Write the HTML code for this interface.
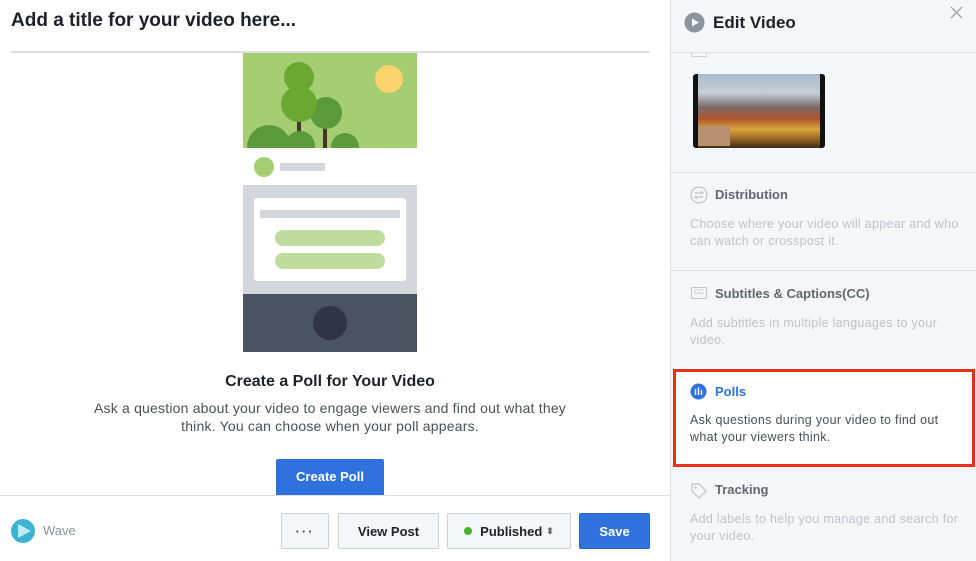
<!DOCTYPE html>
<html><head><meta charset="utf-8"><style>
*{box-sizing:border-box;margin:0;padding:0}
body{width:976px;height:561px;overflow:hidden;background:#fff;font-family:"Liberation Sans",Helvetica,Arial,sans-serif;position:relative;color:#1d2129}
.abs{position:absolute}
.title{left:11px;top:10px;font-size:19px;font-weight:bold;color:#1d2129}
.btn{position:absolute;top:513px;height:36px;border:1px solid #ccd0d5;background:#f5f6f7;border-radius:2px;font-size:13px;font-weight:bold;color:#4b4f56;display:flex;align-items:center;justify-content:center}
.panel{left:670px;top:0;width:306px;height:561px;background:#f5f6f7;border-left:1px solid #dddfe2}
.sep{position:absolute;left:0;width:306px;height:1px;background:#dddfe2}
.h{position:absolute;left:44px;font-size:13px;font-weight:bold;color:#606770}
.d{position:absolute;left:19px;font-size:12.5px;letter-spacing:0.3px;line-height:17px;color:#bec3c9;width:272px}
</style></head><body>
<div class="abs title">Add a title for your video here...</div>
<div class="abs" style="left:11px;top:51px;width:639px;height:2px;background:#dddfe2"></div>
<div class="abs" style="left:243px;top:53px;width:174px;height:299px;overflow:hidden;background:#fff">
<div class="abs" style="left:0;top:0;width:174px;height:95px;background:#a5cd72;overflow:hidden">
 <div class="abs" style="left:132px;top:12px;width:28px;height:28px;border-radius:50%;background:#fdd36b"></div>
 <div class="abs" style="left:54px;top:62px;width:4px;height:40px;background:#4a3328"></div>
 <div class="abs" style="left:80px;top:70px;width:4px;height:30px;background:#4a3328"></div>
 <div class="abs" style="left:4px;top:72px;width:44px;height:44px;border-radius:50%;background:#5b9a3b"></div>
 <div class="abs" style="left:42px;top:78px;width:30px;height:30px;border-radius:50%;background:#5b9a3b"></div>
 <div class="abs" style="left:88px;top:80px;width:28px;height:28px;border-radius:50%;background:#5b9a3b"></div>
 <div class="abs" style="left:67px;top:44px;width:32px;height:32px;border-radius:50%;background:#5b9a3b"></div>
 <div class="abs" style="left:41px;top:9px;width:30px;height:30px;border-radius:50%;background:#6aa832"></div>
 <div class="abs" style="left:38px;top:33px;width:36px;height:36px;border-radius:50%;background:#6aa832"></div>
</div>
<div class="abs" style="left:11px;top:104px;width:20px;height:20px;border-radius:50%;background:#a5cd72"></div>
<div class="abs" style="left:37px;top:110px;width:45px;height:8px;background:#d3d6db"></div>
<div class="abs" style="left:0;top:132px;width:174px;height:110px;background:#d3d6db"></div>
<div class="abs" style="left:11px;top:145px;width:152px;height:83px;background:#fff;border-radius:3px"></div>
<div class="abs" style="left:17px;top:157px;width:140px;height:8px;background:#d3d6db"></div>
<div class="abs" style="left:32px;top:177px;width:110px;height:16px;border-radius:8px;background:#bedc9e"></div>
<div class="abs" style="left:32px;top:200px;width:110px;height:16px;border-radius:8px;background:#bedc9e"></div>
<div class="abs" style="left:0;top:241px;width:174px;height:58px;background:#4b5264"></div>
<div class="abs" style="left:70px;top:253px;width:34px;height:34px;border-radius:50%;background:#2f3545"></div>
</div>
<div class="abs" style="left:0;top:373px;width:660px;text-align:center;font-size:16px;font-weight:bold">Create a Poll for Your Video</div>
<div class="abs" style="left:80px;top:399px;width:500px;text-align:center;font-size:14px;letter-spacing:0.2px;line-height:18px;color:#4b4f56">Ask a question about your video to engage viewers and find out what they think. You can choose when your poll appears.</div>
<div class="abs" style="left:276px;top:459px;width:108px;height:36px;background:#2f72de;border-radius:2px 2px 0 0;color:#fff;font-size:13px;font-weight:bold;text-align:center;line-height:36px">Create Poll</div>
<div class="abs" style="left:0;top:495px;width:670px;height:1px;background:#dddfe2"></div>
<svg class="abs" style="left:10px;top:518px" width="26" height="26" viewBox="0 0 26 26"><circle cx="13" cy="13" r="12" fill="#3bb4d4"/><path d="M8 6 L21 13 L8 20 Z" fill="#bfeaf5"/></svg>
<div class="abs" style="left:43px;top:523px;font-size:13px;color:#90949c">Wave</div>
<div class="btn" style="left:281px;width:48px;letter-spacing:2px">···</div>
<div class="btn" style="left:338px;width:101px;color:#1d2129">View Post</div>
<div class="btn" style="left:447px;width:124px;color:#1d2129"><span style="width:8px;height:8px;border-radius:50%;background:#42b72a;margin-right:8px"></span>Published <span style="font-size:9px;margin-left:4px;color:#606770">⬍</span></div>
<div class="btn" style="left:579px;width:71px;background:#2f72de;border-color:#2a67c8;color:#fff">Save</div>
<div class="abs panel">
 <svg class="abs" style="left:13px;top:12px" width="21" height="21" viewBox="0 0 21 21"><circle cx="10.5" cy="10.5" r="10" fill="#8d949e"/><path d="M8 6.5 L15 10.5 L8 14.5Z" fill="#fff"/></svg>
 <div class="abs" style="left:42px;top:13px;font-size:17px;font-weight:bold;color:#1d2129">Edit Video</div>
 <svg class="abs" style="left:279px;top:6px" width="13" height="13"><path d="M1 1L12 12M12 1L1 12" stroke="#90949c" stroke-width="1.2"/></svg>
 <div class="sep" style="top:52px"></div>
 <div class="abs" style="left:20px;top:53px;width:16px;height:4px;border:1px solid #ccd0d5;border-top:none"></div>
 <div class="abs" style="left:22px;top:74px;width:132px;height:74px;border-radius:3px;background:linear-gradient(180deg,#a9b9cc 0%,#c8ced6 25%,#7a6a6a 45%,#b0552c 60%,#d9a33a 75%,#8a5a22 90%,#3a2a1a 100%);border-left:5px solid #111;border-right:5px solid #111"></div>
 <div class="abs" style="left:27px;top:126px;width:32px;height:20px;background:#b89070"></div>
 <div class="sep" style="top:172px"></div>
 <svg class="abs" style="left:19px;top:186px" width="18" height="18"><circle cx="9" cy="9" r="8" fill="none" stroke="#bec3c9" stroke-width="1.2"/><path d="M5 7h8l-2-2M13 11H5l2 2" fill="none" stroke="#bec3c9" stroke-width="1.2"/></svg>
 <div class="h" style="top:187px">Distribution</div>
 <div class="d" style="top:216px">Choose where your video will appear and who can watch or crosspost it.</div>
 <div class="sep" style="top:270px"></div>
 <div class="abs" style="left:20px;top:287px;width:16px;height:12px;border:1px solid #bec3c9;border-radius:2px;font-size:7px;color:#bec3c9;text-align:center;line-height:10px">CC</div>
 <div class="h" style="top:286px">Subtitles &amp; Captions(CC)</div>
 <div class="d" style="top:315px">Add subtitles in multiple languages to your video.</div>
 <div class="abs" style="left:2px;top:369px;width:302px;height:98px;background:#fff;border:3px solid #e8321b"></div>
 <svg class="abs" style="left:19px;top:383px" width="17" height="17"><circle cx="8.5" cy="8.5" r="8" fill="#2f72de"/><path d="M5.5 6v6M8.5 4.5v7.5M11.5 7v5" stroke="#fff" stroke-width="1.4"/></svg>
 <div class="h" style="top:384px;color:#2f72de">Polls</div>
 <div class="d" style="top:412px;color:#4b4f56">Ask questions during your video to find out what your viewers think.</div>
 <svg class="abs" style="left:19px;top:482px" width="18" height="18"><path d="M2 2h7l7 7-7 7-7-7z" fill="none" stroke="#bec3c9" stroke-width="1.2"/><circle cx="5.5" cy="5.5" r="1.2" fill="#bec3c9"/></svg>
 <div class="h" style="top:482px">Tracking</div>
 <div class="d" style="top:511px">Add labels to help you manage and search for your video.</div>
</div>
</body></html>
